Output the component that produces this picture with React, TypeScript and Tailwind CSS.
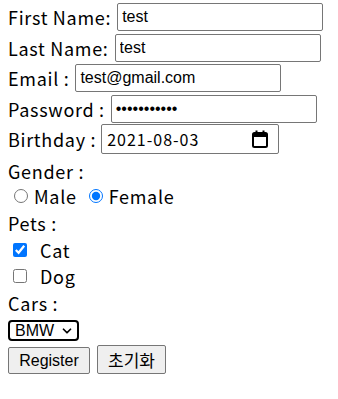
import { ChevronDown } from "lucide-react";

const label = "text-[18px] leading-none text-black whitespace-nowrap tracking-[0.7px]";
const arial = { fontFamily: '"Liberation Sans", Arial, sans-serif' };
const input =
  "h-[28px] border border-[#767676] rounded-[2px] bg-white px-[4px] text-[16px] text-black outline-none";

function Row({ h, children }: { h: string; children: React.ReactNode }) {
  return <div className={`flex items-center ${h}`}>{children}</div>;
}

export default function App() {
  return (
    <div
      className="w-[338px] h-[399px] bg-white pl-[8px] pt-[2px]"
      style={{ fontFamily: '"Noto Sans CJK KR", "Noto Sans", sans-serif' }}
    >
      <Row h="h-[30px]">
        <span className={label}>First Name:</span>
        <input className={`${input} ml-[6px] w-[206px]`} style={arial} defaultValue="test" />
      </Row>
      <Row h="h-[31px]">
        <span className={label}>Last Name:</span>
        <input className={`${input} ml-[6px] w-[206px]`} style={arial} defaultValue="test" />
      </Row>
      <Row h="h-[30px]">
        <span className={label}>Email :</span>
        <input className={`${input} ml-[6px] w-[206px]`} style={arial} defaultValue="test@gmail.com" />
      </Row>
      <Row h="h-[31px]">
        <span className={label}>Password :</span>
        <div className={`${input} ml-[6px] w-[206px] flex items-center`} style={arial}>
          <span className="text-[16px] leading-none">•••••••••••</span>
        </div>
      </Row>
      <Row h="h-[30px]">
        <span className={label}>Birthday :</span>
        <div className="ml-[5px] w-[178px] h-[30px] border border-[#767676] rounded-[2px] flex items-center justify-between pl-[5px] pr-[10px]">
          <span className="text-[16px] leading-none tracking-[1px]">2021-08-03</span>
          <svg width="16" height="18" viewBox="0 0 16 18">
            <rect x="1" y="3" width="14" height="14" rx="1.5" fill="none" stroke="#000" strokeWidth="2" />
            <rect x="1" y="3" width="14" height="4" fill="#000" />
            <rect x="3.5" y="0.5" width="2" height="3" fill="#000" />
            <rect x="10.5" y="0.5" width="2" height="3" fill="#000" />
          </svg>
        </div>
      </Row>
      <Row h="h-[34px]">
        <span className={label}>Gender :</span>
      </Row>
      <Row h="h-[16px]">
        <input type="radio" name="g" className="ml-[6px] w-[14px] h-[14px] m-0" />
        <span className={`${label} ml-[6px]`}>Male</span>
        <input type="radio" name="g" defaultChecked className="ml-[12px] w-[14px] h-[14px] m-0" />
        <span className={`${label} ml-[6px]`}>Female</span>
      </Row>
      <Row h="h-[38px]">
        <span className={label}>Pets :</span>
      </Row>
      <Row h="h-[16px]">
        <input type="checkbox" defaultChecked className="ml-[5px] w-[14px] h-[14px] m-0" />
        <span className={`${label} ml-[13px]`}>Cat</span>
      </Row>
      <Row h="h-[36px]">
        <input type="checkbox" className="ml-[5px] w-[14px] h-[14px] m-0" />
        <span className={`${label} ml-[13px]`}>Dog</span>
      </Row>
      <Row h="h-[18px]">
        <span className={label}>Cars :</span>
      </Row>
      <div className="h-[33px] pt-[4px] flex items-center">
        <div
          className="w-[71px] h-[21px] border-2 border-black rounded-[4px] flex items-center justify-between pl-[5px] pr-[3px] text-[16px] leading-none"
          style={arial}
        >
          <span>BMW</span>
          <ChevronDown size={14} strokeWidth={3} />
        </div>
      </div>
      <div className="flex items-end gap-[7px]">
        <button
          className="w-[82px] h-[27px] bg-[#efefef] border border-[#767676] rounded-[2px] text-[16px] text-black"
          style={arial}
        >
          Register
        </button>
        <button className="w-[69px] h-[29px] bg-[#efefef] border border-[#767676] rounded-[2px] text-[17px] text-black">
          초기화
        </button>
      </div>
    </div>
  );
}
